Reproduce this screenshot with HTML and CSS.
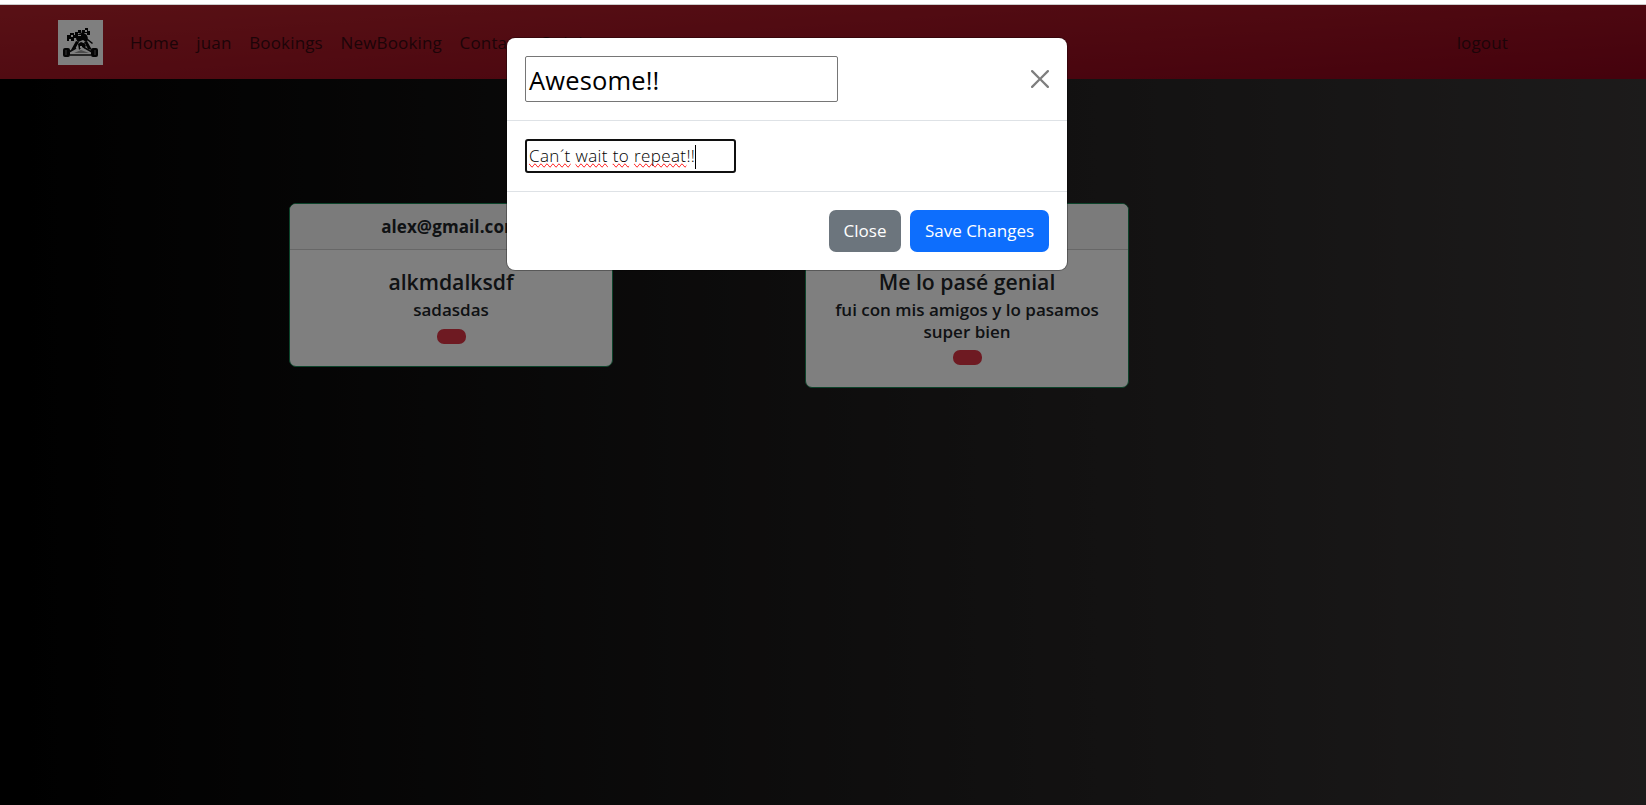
FILE: index.html
```
<!DOCTYPE html>
<html lang="es">
<head>
<meta charset="utf-8">
<title>Karting</title>
<link rel="stylesheet" href="styles.css">
</head>
<body>
<nav class="navbar">
  <svg class="logo" viewBox="0 0 45 45">
    <rect width="45" height="45" fill="#fff"/>
    <g fill="#080808">
      <rect x="5" y="28" width="7" height="9" rx="2"/><rect x="33" y="28" width="7" height="9" rx="2"/>
      <path d="M9 15h3v-2h4v2h3v3h-3v3h-3v-2h-2v2h-2zM17 12h3v-2h3v3h-3v3h-3zM24 10h3v-2h3v3h2v4h-3v-2h-3v3h-3zM30 19l5 4-1 1-5-4z"/>
      <path d="M18 19q1-6 6-6 6 0 6 7l-2 2-3-2-5 2z"/>
      <path d="M13 30l5-9 3 1-4 7zM34 30l-5-9-3 1 4 7zM20 24l3-2 5 2-1 5-3-2-3 3z"/>
    </g>
    <path d="M11 32l7-4M34 32l-7-4M12 35h21" stroke="#111" stroke-width="1.6"/>
    <path d="M16 33l7-3 8 3z" fill="#999"/>
    <path d="M13 15h2v2h-2zM20 15h3v1h-3zM27 10h2v2h-2zM22 26h2v2h-2z" fill="#fff"/>
    <path d="M8 30v5M37 30v5" stroke="#777"/>
  </svg>
  <a class="link">Home</a><a class="link">juan</a><a class="link">Bookings</a><a class="link">NewBooking</a><a class="link">Contact</a><a class="link">Opinions</a>
  <a class="link logout">logout</a>
</nav>
<main class="cards">
  <article class="card">
    <header class="card-header">alex@gmail.com</header>
    <div class="card-body"><h5 class="title">alkmdalksdf</h5><p class="text">sadasdas</p><span class="pill"></span></div>
  </article>
  <article class="card">
    <header class="card-header"></header>
    <div class="card-body"><h5 class="title">Me lo pasé genial</h5><p class="text">fui con mis amigos y lo pasamos<br>super bien</p><span class="pill"></span></div>
  </article>
</main>
<div class="backdrop"></div>
<section class="modal">
  <header class="modal-header">
    <div class="title-input">Awesome!!</div>
    <svg class="close-icon" viewBox="0 0 16 16"><path d="M.293.293a1 1 0 0 1 1.414 0L8 6.586 14.293.293a1 1 0 1 1 1.414 1.414L9.414 8l6.293 6.293a1 1 0 0 1-1.414 1.414L8 9.414l-6.293 6.293a1 1 0 0 1-1.414-1.414L6.586 8 .293 1.707a1 1 0 0 1 0-1.414z"/></svg>
  </header>
  <div class="modal-body"><div class="text-input"><span class="miss">Can´t</span> <span class="miss">wait</span> <span class="miss">to</span> <span class="miss">repeat</span>!!<i class="caret"></i></div></div>
  <footer class="modal-footer"><button class="btn close">Close</button><button class="btn save">Save Changes</button></footer>
</section>
</body>
</html>
```
FILE: styles.css
```
* { box-sizing: border-box; }
body { margin: 0; height: 805px; overflow: hidden; background: #fff; font-family: "Open Sans", "Noto Sans", sans-serif; font-size: 17px; color: #212529; display: flex; flex-direction: column; padding-top: 4px; }
.navbar { height: 75px; flex: none; display: flex; align-items: center; padding: 0 138px 0 58px; background: linear-gradient(176deg, #b2222b, #8a041a); background-clip: padding-box; border-top: 1px solid #ccc; }
.logo { width: 45px; height: 45px; margin-right: 27px; }
.link { color: #3a0810; letter-spacing: .15px; margin-right: 17.7px; line-height: 26px; padding-top: 2px; white-space: nowrap; }
.logout { margin: 0 0 0 auto; }
.cards { flex: 1; background: linear-gradient(90deg, #000, #393636); padding: 124px 0 0 289px; display: flex; gap: 192px; align-items: flex-start; }
.card { width: 324px; border: 1px solid #198754; border-radius: 7px; background: #fff; text-align: center; overflow: hidden; }
.card-header { height: 46px; padding-top: 10px; line-height: 26px; font-weight: 700; letter-spacing: .1px; background: #f7f7f7; border-bottom: 1px solid #cfcfcf; }
.card-body { padding: 18px 0 22px; }
.title { margin: 0; font-size: 21.2px; font-weight: 600; line-height: 27px; }
.text { margin: 4px 0 8px; font-weight: 600; line-height: 21.6px; }
.pill { display: block; width: 29px; height: 15px; border-radius: 7px; background: #dc3545; margin: 0 auto; }
.backdrop { position: absolute; left: 0; right: 0; top: 5px; bottom: 0; background: rgba(0,0,0,.5); }
.modal { position: absolute; left: 507px; top: 38px; width: 560px; height: 232px; background: #fff; border-radius: 8px; box-shadow: 0 0 0 1px rgba(0,0,0,.3); color: #000; }
.modal-header { height: 83px; padding: 0 18px; display: flex; align-items: center; justify-content: space-between; border-bottom: 1px solid #dee2e6; }
.title-input { width: 313px; height: 46px; border: 1px solid #767676; border-radius: 2px; font-size: 25.5px; letter-spacing: .15px; line-height: 46px; padding-left: 3px; }
.close-icon { width: 18px; height: 18px; opacity: .5; }
.modal-body { height: 70px; padding: 18px; }
.text-input { width: 211px; height: 34px; border: 2px solid #101010; border-radius: 3px; line-height: 30px; padding-left: 2px; white-space: nowrap; font-weight: 300; letter-spacing: .39px; }
.miss { text-decoration: spelling-error; }
.caret { display: inline-block; width: 1px; height: 24px; background: #000; vertical-align: middle; }
.modal-footer { height: 79px; padding: 18px; border-top: 1px solid #dee2e6; display: flex; justify-content: flex-end; gap: 9px; }
.btn { height: 42px; border: 0; border-radius: 7px; color: #fff; font: 17px "Open Sans", sans-serif; padding: 0 0 2px; }
.close { width: 72px; background: #6c757d; }
.save { width: 139px; background: #0d6efd; }
```
